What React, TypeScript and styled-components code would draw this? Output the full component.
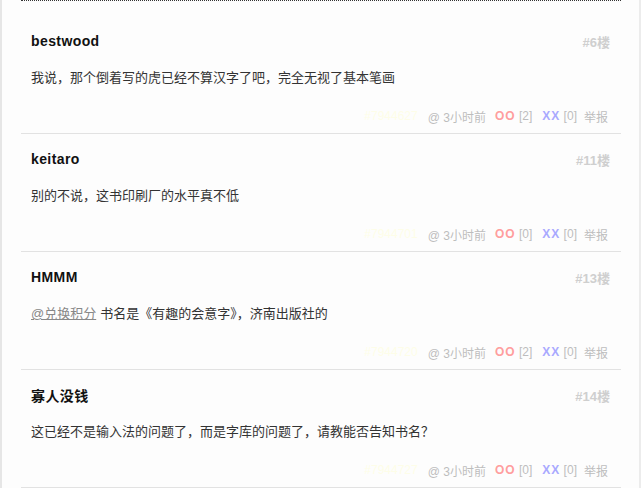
import React from 'react';
import styled, { createGlobalStyle } from 'styled-components';

const GlobalStyle = createGlobalStyle`
  html, body {
    margin: 0;
    padding: 0;
    background: #fdfdfd;
  }
  body {
    font-family: "Liberation Sans", "Noto Sans CJK SC", sans-serif;
  }
`;

const Page = styled.div`
  box-sizing: border-box;
  width: 641px;
  height: 488px;
  overflow: hidden;
  background: #fdfdfd;
  border-left: 2px solid #e6e6e6;
  border-right: 2px solid #ececec;
`;

const CommentList = styled.ol`
  list-style: none;
  margin: 0 18px 0 19px;
  padding: 15px 0 0;
  border-top: 1px dotted #333;
`;

const CommentItem = styled.li`
  padding: 15px 11px 7px 10px;
  border-bottom: 1px solid #e2e2e2;
`;

const AuthorRow = styled.div`
  display: flex;
  justify-content: space-between;
  align-items: center;
  height: 20px;
`;

const Author = styled.strong`
  font-size: 14px;
  font-weight: bold;
  letter-spacing: 0.4px;
  color: #111;
`;

const Floor = styled.span`
  font-size: 13px;
  font-weight: bold;
  color: #cfcfcf;
`;

const Content = styled.p`
  margin: 16px 0 0;
  font-size: 13px;
  line-height: 22px;
  color: #333;
`;

const Mention = styled.a`
  color: #888;
  text-decoration: underline;
  margin-right: 4px;
`;

const Footer = styled.div`
  margin-top: 17px;
  padding-right: 2px;
  display: flex;
  justify-content: flex-end;
  align-items: center;
  height: 20px;
  font-size: 12px;
  color: #bdbdbd;
  white-space: pre;
`;

const HiddenId = styled.span`
  color: #fdfde8;
  margin-right: 10px;
`;

const Time = styled.span`
  margin-right: 9px;
`;

const Vote = styled.span<{ $color: string }>`
  font-weight: bold;
  letter-spacing: 1px;
  color: ${p => p.$color};
`;

const Count = styled.span`
  margin-right: 10px;
`;

const Report = styled.span`
  margin-left: -3px;
`;

interface Comment {
  author: string;
  floor: number;
  mention?: string;
  text: string;
  id: string;
  oo: number;
  xx: number;
}

const comments: Comment[] = [
  { author: 'bestwood', floor: 6, text: '我说，那个倒着写的虎已经不算汉字了吧，完全无视了基本笔画', id: '7944627', oo: 2, xx: 0 },
  { author: 'keitaro', floor: 11, text: '别的不说，这书印刷厂的水平真不低', id: '7944701', oo: 0, xx: 0 },
  { author: 'HMMM', floor: 13, mention: '@兑换积分', text: '书名是《有趣的会意字》，济南出版社的', id: '7944720', oo: 2, xx: 0 },
  { author: '寡人没钱', floor: 14, text: '这已经不是输入法的问题了，而是字库的问题了，请教能否告知书名？', id: '7944727', oo: 0, xx: 0 },
];

const App: React.FC = () => {
  return (
    <Page>
      <GlobalStyle />
      <CommentList>
        {comments.map(c => (
          <CommentItem key={c.id}>
            <AuthorRow>
              <Author>{c.author}</Author>
              <Floor>#{c.floor}楼</Floor>
            </AuthorRow>
            <Content>
              {c.mention && <Mention>{c.mention}</Mention>}
              {c.text}
            </Content>
            <Footer>
              <HiddenId>#{c.id}</HiddenId>
              <Time>@ 3小时前</Time>
              <Vote $color="#ff9e9e">OO</Vote>
              <Count> [{c.oo}]</Count>
              <Vote $color="#a9a9ff">XX</Vote>
              <Count> [{c.xx}]</Count>
              <Report>举报</Report>
            </Footer>
          </CommentItem>
        ))}
      </CommentList>
    </Page>
  );
};

export default App;
